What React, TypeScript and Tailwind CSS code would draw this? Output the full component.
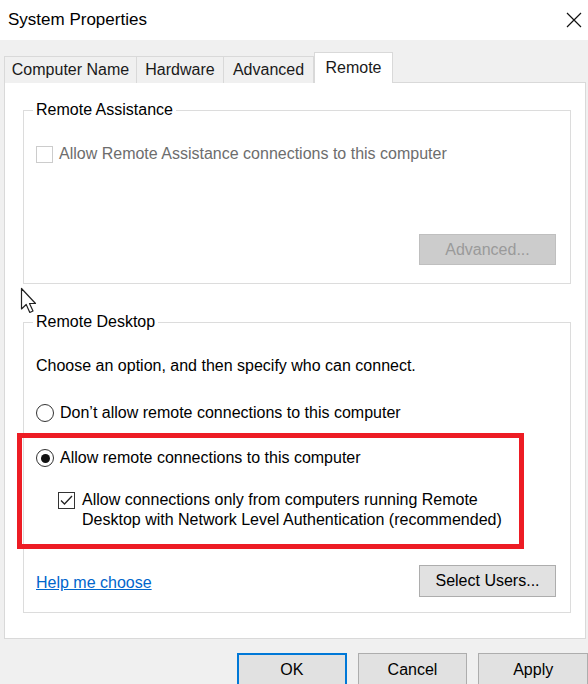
import React from "react";

const font = { fontFamily: '"Liberation Sans", Arial, sans-serif' };

function CheckBox({ checked, disabled }: { checked?: boolean; disabled?: boolean }) {
  return (
    <div
      className={
        "w-[17px] h-[17px] shrink-0 border bg-white flex items-center justify-center " +
        (disabled ? "border-[#cccccc]" : "border-[#333333]")
      }
    >
      {checked && (
        <svg width="13" height="11" viewBox="0 0 13 11">
          <path d="M1 5.5 L4.5 9 L12 1" fill="none" stroke="#222" strokeWidth="1.3" />
        </svg>
      )}
    </div>
  );
}

function Radio({ checked }: { checked?: boolean }) {
  return (
    <div className="w-[18px] h-[18px] shrink-0 rounded-full border border-[#333333] bg-white flex items-center justify-center">
      {checked && <div className="w-[9px] h-[9px] rounded-full bg-[#111111]" />}
    </div>
  );
}

export default function App() {
  return (
    <div
      className="relative w-[588px] h-[684px] bg-[#f0f0f0] overflow-hidden text-[16px] text-black"
      style={font}
    >
      {/* title bar */}
      <div className="h-[40px] bg-white flex items-center justify-between pl-[8px] pr-[3px]">
        <span className="text-[17px] leading-[20px] text-black">System Properties</span>
        <svg width="18" height="18" viewBox="0 0 18 18" className="mr-[2px]">
          <path d="M2 2 L16 16 M16 2 L2 16" stroke="#111" strokeWidth="1.2" />
        </svg>
      </div>

      {/* tabs */}
      <div className="flex items-end pl-[4px] h-[43px] -mb-px relative z-10">
        <div className="h-[27px] w-[133px] border border-[#d9d9d9] border-b-0 bg-[#f0f0f0] flex items-center justify-center text-[#1a1a1a]">
          Computer Name
        </div>
        <div className="h-[27px] w-[87px] border border-[#d9d9d9] border-l-0 border-b-0 bg-[#f0f0f0] flex items-center justify-center text-[#1a1a1a]">
          Hardware
        </div>
        <div className="h-[27px] w-[90px] border border-[#d9d9d9] border-l-0 border-b-0 bg-[#f0f0f0] flex items-center justify-center text-[#1a1a1a]">
          Advanced
        </div>
        <div className="h-[31px] w-[79px] border border-[#d9d9d9] border-b-0 bg-white flex items-start justify-center pt-[3px] text-[#1a1a1a]">
          Remote
        </div>
      </div>

      {/* panel */}
      <div className="ml-[4px] w-[582px] h-[557px] border border-[#d9d9d9] bg-white pl-[18px] pt-[27px]">
        {/* Remote Assistance */}
        <div className="relative w-[548px] h-[174px] border border-[#dcdcdc] flex flex-col pl-[12px] pr-[14px] pt-[34px]">
          <span className="absolute left-[9px] -top-[11px] bg-white px-[3px] leading-[20px]">Remote Assistance</span>
          <div className="flex items-center gap-[6px] h-[18px]">
            <CheckBox disabled />
            <span className="text-[#6d6d6d] leading-[20px]">Allow Remote Assistance connections to this computer</span>
          </div>
          <div className="flex justify-end mt-[71px]">
            <div className="w-[137px] h-[31px] bg-[#cccccc] border border-[#bfbfbf] flex items-center justify-center text-[#9a9a9a]">
              Advanced...
            </div>
          </div>
        </div>

        {/* Remote Desktop */}
        <div className="relative mt-[38px] w-[548px] h-[291px] border border-[#dcdcdc] flex flex-col pl-[12px] pr-[14px] pt-[33px] pb-[15px]">
          <span className="absolute left-[9px] -top-[11px] bg-white px-[3px] leading-[20px]">Remote Desktop</span>
          <div className="leading-[20px]">Choose an option, and then specify who can connect.</div>
          <div className="flex items-center gap-[6px] h-[20px] mt-[27px]">
            <Radio />
            <span className="leading-[20px]">Don’t allow remote connections to this computer</span>
          </div>
          <div className="-ml-[19px] mt-[10px] w-[507px] h-[116px] border-[5px] border-[#ed1c24] pl-[14px] pt-[10px]">
            <div className="flex items-center gap-[6px] h-[20px]">
              <Radio checked />
              <span className="leading-[20px]">Allow remote connections to this computer</span>
            </div>
            <div className="flex items-start gap-[7px] mt-[22px] pl-[22px]">
              <div className="mt-[2px]">
                <CheckBox checked />
              </div>
              <div className="leading-[20px]">
                Allow connections only from computers running Remote
                <br />
                Desktop with Network Level Authentication (recommended)
              </div>
            </div>
          </div>
          <div className="mt-auto flex items-center justify-between">
            <span className="text-[#0066cc] underline leading-[20px] pt-[4px]">Help me choose</span>
            <div className="w-[137px] h-[32px] bg-[#e1e1e1] border border-[#adadad] flex items-center justify-center">
              Select Users...
            </div>
          </div>
        </div>
      </div>

      {/* bottom buttons */}
      <div className="flex gap-[11px] pl-[237px] mt-[14px]">
        <div className="w-[110px] h-[34px] bg-[#e1e1e1] border-2 border-[#0078d7] flex items-center justify-center">OK</div>
        <div className="w-[110px] h-[34px] bg-[#e1e1e1] border border-[#adadad] flex items-center justify-center">Cancel</div>
        <div className="w-[110px] h-[34px] bg-[#e1e1e1] border border-[#adadad] flex items-center justify-center">Apply</div>
      </div>

      {/* mouse cursor */}
      <svg
        className="absolute left-[20px] top-[287px]"
        width="20"
        height="30"
        viewBox="0 0 20 30"
      >
        <path
          d="M1.5 1.5 L1.5 22 L6.2 17.5 L9.8 25.5 L13 24 L9.5 16.5 L15.5 16.5 Z"
          fill="#ffffff"
          stroke="#222222"
          strokeWidth="1.2"
          strokeLinejoin="round"
        />
      </svg>
    </div>
  );
}
